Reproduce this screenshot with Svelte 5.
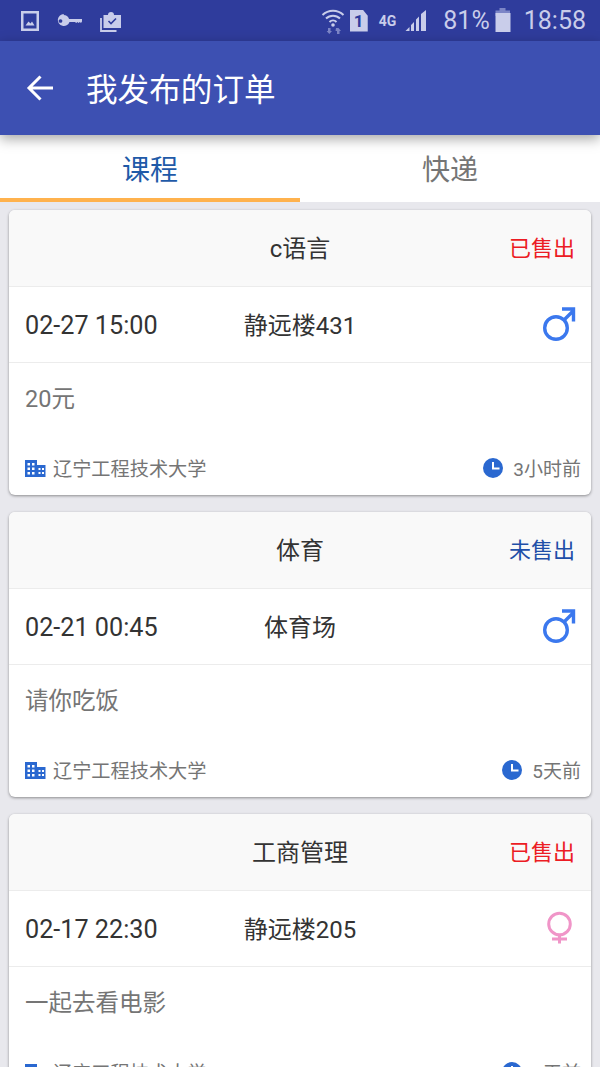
<script>
  const ORDERS = [
    { title: 'c语言', status: '已售出', sold: true, time: '02-27 15:00', place: '静远楼431', gender: 'male', note: '20元', ago: '3小时前' },
    { title: '体育', status: '未售出', sold: false, time: '02-21 00:45', place: '体育场', gender: 'male', note: '请你吃饭', ago: '5天前' },
    { title: '工商管理', status: '已售出', sold: true, time: '02-17 22:30', place: '静远楼205', gender: 'female', note: '一起去看电影', ago: '8天前' },
  ];
</script>

<div class="page">
  <div class="statusbar">
    <div class="status-left">
      <svg width="20" height="22" viewBox="0 0 20 22">
        <path fill="#c9cdea" fill-rule="evenodd" d="M1 1h18v20H1zM3.500 3.500v15h13v-15z" />
        <path fill="#c9cdea" d="M5.500 15.500l3-4 2 2 1.500-2 2.500 4z" />
      </svg>
      <svg width="26" height="14" viewBox="0 0 26 14">
        <path fill="#c9cdea" fill-rule="evenodd" d="M6.500 1a6 6 0 0 1 5.600 4H25v2.500l-1 1.500-1.200-1-1.200 1-1.200-1-1.200 1-1.200-1h-5.500a6 6 0 1 1-5.500-8zM3.500 5.200a1.800 1.800 0 1 0 .01 0z" />
      </svg>
      <svg width="22" height="22" viewBox="0 0 22 22">
        <path fill="#c9cdea" d="M3.500 5h4.500a3 3 0 0 1 6 0H21v13H3.500z" />
        <path fill="none" stroke="#2f3c9c" stroke-width="1.600" d="M8.500 11l2.500 2.500 5-5" />
        <path fill="none" stroke="#c9cdea" stroke-width="1.800" d="M1 8v13h15.500" />
      </svg>
    </div>
    <div class="status-right">
      <svg width="24" height="28" viewBox="0 0 24 28">
        <path fill="none" stroke="#c9cdea" stroke-width="2" d="M1.500 8a15 15 0 0 1 21 0M5 11.500a10 10 0 0 1 14 0M8.500 15a5 5 0 0 1 7 0" />
        <circle cx="12" cy="18" r="1.800" fill="#c9cdea" />
        <path fill="#7c85c6" d="M7 21h2.500v3H11l-2.700 3-2.700-3H7zM15 21h2.500l2.500 3h-1.500v3H16v-3h-1.500z" />
      </svg>
      <div class="sim">1</div>
      <span class="net">4G</span>
      <svg class="signal" width="22" height="22" viewBox="0 0 22 22">
        <path fill="#c9cdea" d="M0.500 21l4-4v4zM6 21v-6l3-3v9zM11 21V9.500l3-3V21zM16 21V4l5-4v21z" />
      </svg>
      <span class="pct">81%</span>
      <svg class="batt" width="16" height="24" viewBox="0 0 16 24">
        <path fill="#7c85c6" d="M4.500 0h6v2.500h4.500V8H0.500V2.500h4z" />
        <path fill="#c9cdea" d="M0.500 5h15v19h-15z" />
      </svg>
      <span class="clock">18:58</span>
    </div>
  </div>

  <header class="appbar">
    <svg width="28" height="28" viewBox="0 0 28 28">
      <path fill="none" stroke="#fff" stroke-width="3" d="M27 14H3M14.500 2.500L3 14l11.500 11.500" />
    </svg>
    <h1>我发布的订单</h1>
  </header>

  <nav class="tabs">
    <div class="tab active">课程</div>
    <div class="tab">快递</div>
  </nav>

  <main class="list">
    {#each ORDERS as o}
      <section class="card">
        <div class="head">
          <span class="title">{o.title}</span>
          <span class="status" class:sold={o.sold}>{o.status}</span>
        </div>
        <div class="info">
          <span class="time">{o.time}</span>
          <span class="place">{o.place}</span>
          {#if o.gender === 'male'}
            <svg class="gender" width="34" height="36" viewBox="0 0 34 36">
              <circle cx="14" cy="22" r="11.300" fill="none" stroke="#3b78ee" stroke-width="3.400" />
              <path fill="none" stroke="#3b78ee" stroke-width="3.400" d="M22.500 13.500L31 5M20 3h11.500v12.500" />
            </svg>
          {:else}
            <svg class="gender" width="34" height="36" viewBox="0 0 34 36">
              <circle cx="17.500" cy="14" r="10.800" fill="none" stroke="#f095c8" stroke-width="3" />
              <path fill="none" stroke="#f095c8" stroke-width="3" d="M17.500 25v8.500M10 29h15" />
            </svg>
          {/if}
        </div>
        <div class="body">
          <p class="note">{o.note}</p>
          <div class="foot">
            <span class="school">
              <svg width="21" height="17" viewBox="0 0 21 17">
                <path fill="#2a68d0" fill-rule="evenodd" d="M0 0h12v5h8.500v12H0zM2.500 3v2.500h2.500V3zM7 3v2.500h2.500V3zM2.500 7.500V10h2.500V7.500zM7 7.500V10h2.500V7.500zM2.500 12v2.500h2.500V12zM7 12v2.500h2.500V12zM13.500 8v2h2V8zM17 8v2h2V8zM13.500 12v2h2v-2zM17 12v2h2v-2z" />
              </svg>
              <span class="lbl">辽宁工程技术大学</span>
            </span>
            <span class="ago">
              <svg width="20" height="20" viewBox="0 0 20 20">
                <circle cx="10" cy="10" r="10" fill="#2a68d0" />
                <path fill="none" stroke="#fff" stroke-width="2" d="M10 4v6.500h6.500" />
              </svg>
              <span class="lbl">{o.ago}</span>
            </span>
          </div>
        </div>
      </section>
    {/each}
  </main>
</div>

<style>
  :global(body) {
    margin: 0;
  }

  .page {
    width: 600px;
    height: 1067px;
    overflow: hidden;
    background: #e8e8ed;
    font-family: Roboto, "Noto Sans CJK SC", sans-serif;
  }

  .statusbar {
    height: 41px;
    background: #2f3c9c;
    display: flex;
    justify-content: space-between;
    align-items: center;
    padding: 0 14px 0 20px;
    color: #c9cdea;
  }

  .status-left,
  .status-right {
    display: flex;
    align-items: center;
  }

  .status-left { gap: 17px; }

  .sim {
    width: 18px;
    height: 22px;
    margin-left: 5px;
    background: #c9cdea;
    color: #2f3c9c;
    clip-path: polygon(0 0, 72% 0, 100% 28%, 100% 100%, 0 100%);
    font: 700 17px/22px Roboto, sans-serif;
    text-align: center;
  }

  .net {
    font-size: 14px;
    font-weight: 700;
    align-self: flex-start;
    margin: 8px 0 0 11px;
    line-height: 14px;
  }

  .signal { margin-left: 9px; }

  .pct {
    font-size: 25px;
    margin-left: 16px;
  }

  .batt { margin: 0 0 2px 5px; }

  .clock {
    font-size: 25px;
    margin-left: 13px;
  }

  .appbar {
    position: relative;
    z-index: 2;
    height: 94px;
    box-sizing: border-box;
    background: #3d50b2;
    display: flex;
    align-items: center;
    padding-left: 26px;
    box-shadow: 0 4px 12px rgba(0, 0, 0, 0.35);
  }

  .appbar h1 {
    margin: 0 0 2px 32px;
    font-size: 31.600px;
    font-weight: 400;
    color: #fff;
  }

  .tabs {
    display: flex;
    height: 67px;
    background: #fff;
  }

  .tab {
    flex: 1;
    box-sizing: border-box;
    padding-top: 16px;
    text-align: center;
    font-size: 28px;
    line-height: 40px;
    color: #757575;
  }

  .tab.active {
    color: #1f5aa8;
    border-bottom: 4px solid #ffb24d;
  }

  .list {
    display: flex;
    flex-direction: column;
    gap: 17px;
    padding: 8px 9px 0;
  }

  .card {
    flex: none;
    height: 285px;
    border-radius: 6px;
    background: #fff;
    overflow: hidden;
    box-shadow: 0 1px 3px rgba(0, 0, 0, 0.4);
    display: flex;
    flex-direction: column;
  }

  .head {
    position: relative;
    height: 77px;
    flex: none;
    box-sizing: border-box;
    padding-bottom: 4px;
    background: #f9f9f9;
    border-bottom: 1px solid #ececec;
    display: flex;
    align-items: center;
    justify-content: center;
  }

  .title {
    font-size: 24px;
    color: #333;
  }

  .status {
    position: absolute;
    right: 16px;
    font-size: 22px;
    color: #1f4fa8;
  }

  .status.sold { color: #ec1c24; }

  .info {
    position: relative;
    height: 76px;
    flex: none;
    box-sizing: border-box;
    padding-bottom: 3px;
    border-bottom: 1px solid #ececec;
    display: flex;
    align-items: center;
    justify-content: center;
    font-size: 24px;
    color: #333;
  }

  .time {
    position: absolute;
    left: 16px;
    margin-top: 4px;
    font-size: 25.200px;
  }

  .gender {
    position: absolute;
    right: 15px;
    top: 19px;
  }

  .body {
    flex: 1;
    display: flex;
    flex-direction: column;
    justify-content: space-between;
    padding: 19px 10px 12px 16px;
    color: #757575;
  }

  .note {
    margin: 0;
    font-size: 23.500px;
    line-height: 34px;
  }

  .foot {
    display: flex;
    justify-content: space-between;
    align-items: center;
    font-size: 19.200px;
    line-height: 26px;
  }

  .school,
  .ago {
    display: flex;
    align-items: center;
    gap: 7px;
  }

  .ago {
    gap: 10px;
    font-size: 19px;
  }

  .lbl { padding-top: 4px; }
</style>
